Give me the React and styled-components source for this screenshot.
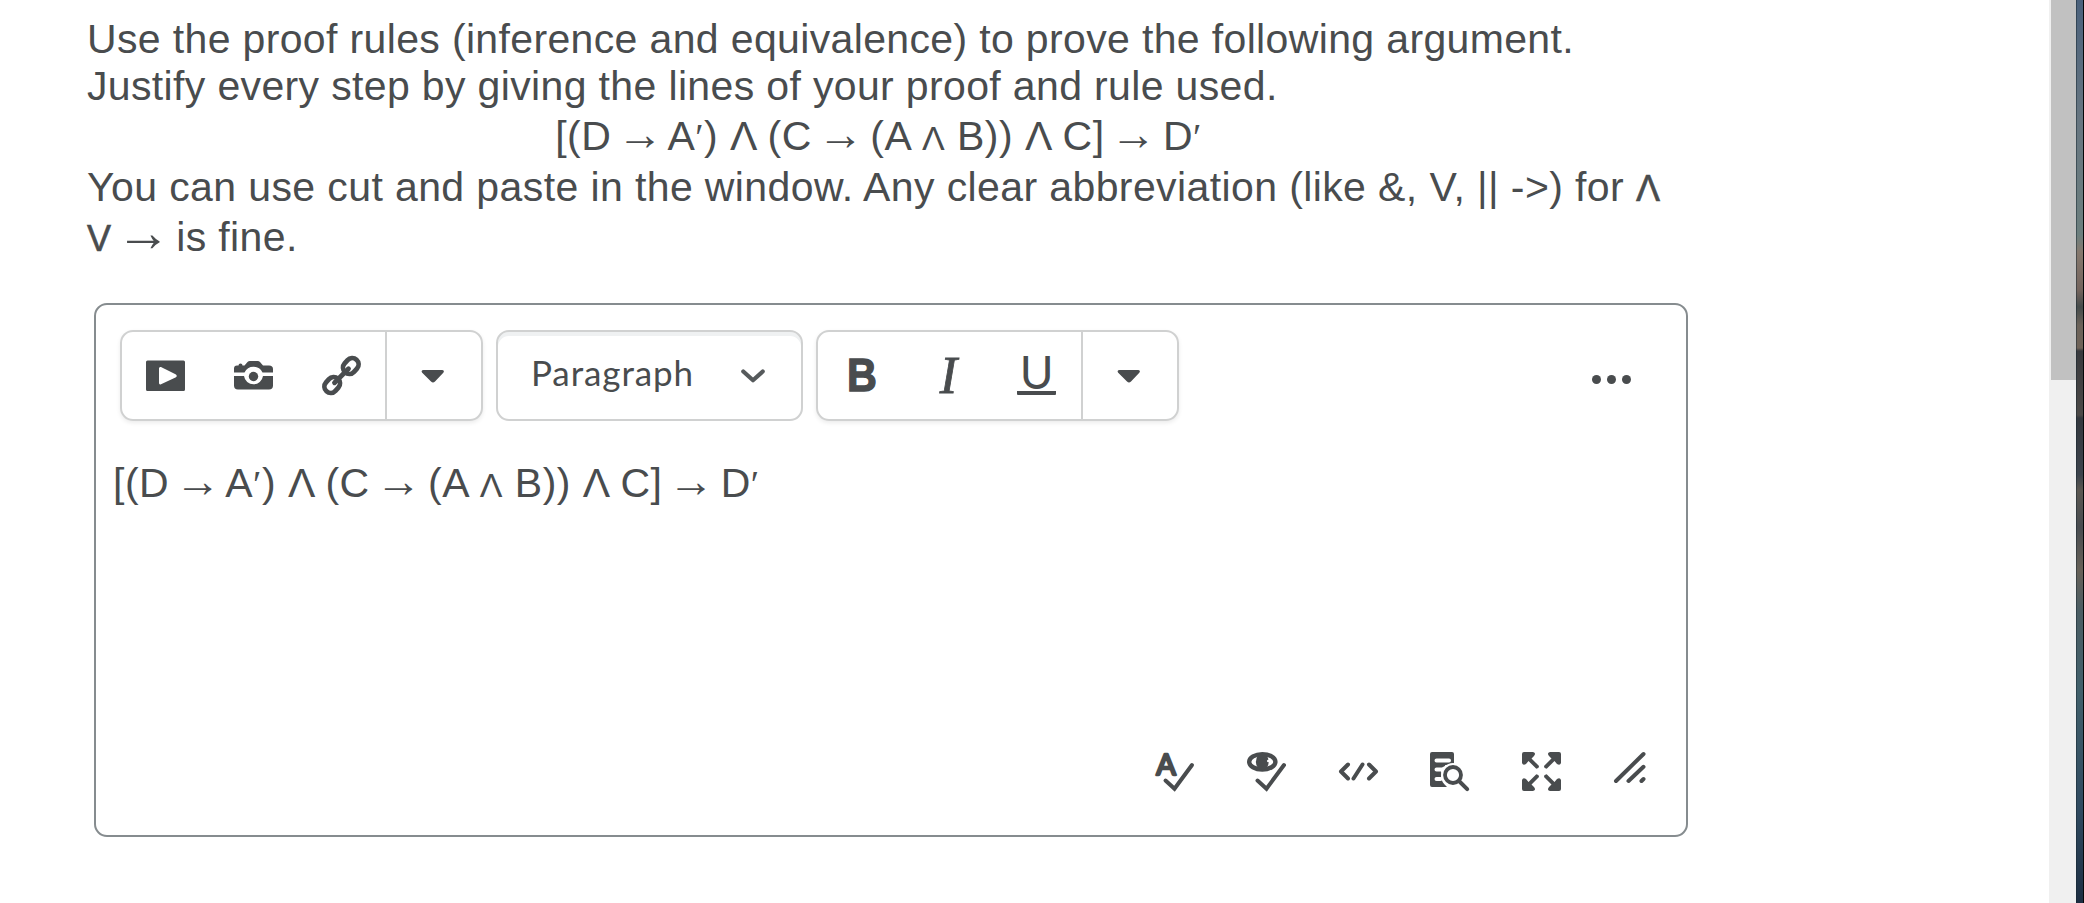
import React from "react";
import styled, { createGlobalStyle } from "styled-components";

const ink = "#494c4e";

export default function App() {
  return (
    <>
      <GlobalStyle />
      <Page>
        <Content>
          <Question>
            <Line>
              Use the proof rules (inference and equivalence) to prove the following argument.
            </Line>
            <Line>Justify every step by giving the lines of your proof and rule used.</Line>
            <FormulaLine>
              <Formula />
            </FormulaLine>
            <Hint>
              You can use cut and paste in the window. Any clear abbreviation (like &amp;, V, || -&gt;) for{" "}
              <Wedge>Λ</Wedge>
              <br />
              <Wedge>V</Wedge> <Arrow $size={55}>→</Arrow> is fine.
            </Hint>
          </Question>
          <Editor>
            <Toolbar>
              <Group>
                <Tool><MediaIcon /></Tool>
                <Tool><CameraIcon /></Tool>
                <Tool><LinkIcon /></Tool>
                <More><Caret /></More>
              </Group>
              <Select>
                <span>Paragraph</span>
                <Chevron />
              </Select>
              <Group>
                <Tool><Bold>B</Bold></Tool>
                <Tool><Italic>I</Italic></Tool>
                <Tool><Underline>U</Underline></Tool>
                <More><Caret /></More>
              </Group>
              <Dots>
                <Dot />
                <Dot />
                <Dot />
              </Dots>
            </Toolbar>
            <Text>
              <Formula />
            </Text>
            <Footer>
              <SpellIcon />
              <EyeIcon />
              <CodeIcon />
              <PreviewIcon />
              <ExpandIcon />
              <ResizeIcon />
            </Footer>
          </Editor>
        </Content>
        <Scrollbar>
          <Thumb />
        </Scrollbar>
        <Wallpaper />
      </Page>
    </>
  );
}

function Formula() {
  return (
    <FormulaText>
      [(D <Arrow>→</Arrow> A<Prime>′</Prime>) Λ (C <Arrow>→</Arrow> (A <Small>Λ</Small> B)) Λ C]{" "}
      <Arrow>→</Arrow> D<Prime>′</Prime>
    </FormulaText>
  );
}

function MediaIcon() {
  return (
    <Icon viewBox="0 0 39 39">
      <path
        fillRule="evenodd"
        d="M1.5 4.5h36A1.5 1.5 0 0 1 39 6v27.500a1.500 1.500 0 0 1-1.500 1.500h-36A1.500 1.500 0 0 1 0 33.500V6a1.500 1.500 0 0 1 1.500-1.500zM13 12.500v14.500q0 2 2 1.300l15-7q1.800-1.300 0-2.700l-15-7.500q-2-.600-2 1.400z"
      />
    </Icon>
  );
}

function CameraIcon() {
  return (
    <Icon viewBox="0 0 39 39">
      <path d="M0 16.500v-4Q0 9.700 3 9.500h1.500q0-2 2-2t2 2h2L13.500 6q1-1 2.300-1h8q1.200 0 2.200 1l3 3.500h6q4 0 4 3.500v3.500H28.500a10 10 0 0 0-18 0z" />
      <path d="M0 20h10a9.600 9.600 0 0 0 19 0h10v9.500q0 4-4 4H4q-4 0-4-4z" />
      <circle cx="19.500" cy="20.500" r="4.700" />
    </Icon>
  );
}

function LinkIcon() {
  return (
    <Icon viewBox="0 0 39 39">
      <g fill="none" stroke={ink} strokeWidth="4.800" strokeLinecap="round">
        <rect x="20.300" y="3.700" width="17" height="12.600" rx="6.300" transform="rotate(-48 28.800 10)" />
        <rect x="1.700" y="22.700" width="17" height="12.600" rx="6.300" transform="rotate(-48 10.200 29)" />
        <path d="M12.500 26.700L26.500 12.700" />
      </g>
    </Icon>
  );
}

function Caret() {
  return (
    <Icon viewBox="0 0 39 39">
      <path d="M9.500 14h18.500q3 .5 1.300 2.800l-8.300 8.800q-2 2-4 0L8.200 16.800Q6.500 14.500 9.500 14z" />
    </Icon>
  );
}

function Chevron() {
  return (
    <svg width="24" height="14" viewBox="0 0 24 14">
      <path d="M2.300 2.500L12 11.200l9.700-8.700" fill="none" stroke="#565a5c" strokeWidth="4.200" strokeLinecap="round" strokeLinejoin="round" />
    </svg>
  );
}

function SpellIcon() {
  return (
    <Icon viewBox="0 0 39 39">
      <text x="11" y="22.500" textAnchor="middle" fontFamily="Lato, sans-serif" fontSize="29" letterSpacing="0" stroke={ink} strokeWidth="2.400" strokeLinejoin="round">A</text>
      <path d="M10.500 28.500l9 8.200L37 13" fill="none" stroke={ink} strokeWidth="4" strokeLinecap="round" />
    </Icon>
  );
}

function EyeIcon() {
  return (
    <Icon viewBox="0 0 39 39">
      <ellipse cx="15.300" cy="9.800" rx="13.100" ry="7.700" fill="none" stroke={ink} strokeWidth="4.400" />
      <ellipse cx="15.300" cy="9.800" rx="6.400" ry="8.500" />
      <circle cx="21.200" cy="9" r="1.200" fill="#fff" />
      <path d="M10.500 28.500l9 8.200L37 13" fill="none" stroke={ink} strokeWidth="4" strokeLinecap="round" />
    </Icon>
  );
}

function CodeIcon() {
  return (
    <Icon viewBox="0 0 39 39">
      <path d="M9 12.500l-7 7 7 7M23.500 12.500l-9 14M30 12.500l7 7-7 7" fill="none" stroke={ink} strokeWidth="4" strokeLinecap="round" strokeLinejoin="round" />
    </Icon>
  );
}

function PreviewIcon() {
  return (
    <Icon viewBox="0 0 39 39">
      <path d="M2 0h20q2 0 2 2v11H14a12 12 0 0 0-3 10q0 7 6 12H2q-2 0-2-2V2Q0 0 2 0z" />
      <path d="M6.500 8.500h12.500M6.500 17.500h6M6.500 27h4" stroke="#fff" strokeWidth="4" strokeLinecap="round" />
      <path d="M7.500 13h6M7.500 22h3" stroke={ink} strokeWidth="3.600" strokeLinecap="round" />
      <circle cx="23" cy="23" r="12" fill="#fff" />
      <circle cx="23" cy="23" r="8" fill="none" stroke={ink} strokeWidth="3.800" />
      <path d="M29 29l8.200 8.200" stroke={ink} strokeWidth="4" strokeLinecap="round" />
    </Icon>
  );
}

function ExpandIcon() {
  const arrow = "M0 2q0-2 2-2h9q3.500 1 1 4L9.500 6.500l7.300 7.300q.800 2.500-2.500 3L6.500 9 4 12q-3 2-4-1z";
  return (
    <Icon viewBox="0 0 39 39">
      <path d={arrow} />
      <path d={arrow} transform="translate(39 0) scale(-1 1)" />
      <path d={arrow} transform="translate(0 39) scale(1 -1)" />
      <path d={arrow} transform="translate(39 39) scale(-1 -1)" />
    </Icon>
  );
}

function ResizeIcon() {
  return (
    <Icon viewBox="0 0 39 39">
      <path d="M2 29L29.500 2M14.500 29l15-14.200M27.500 29l2-2" stroke={ink} strokeWidth="4" strokeLinecap="round" />
    </Icon>
  );
}

const GlobalStyle = createGlobalStyle`
  body {
    margin: 0;
    background: #fff;
    color: ${ink};
    font-family: "Liberation Sans", Arial, sans-serif;
    font-size: 41px;
    letter-spacing: 0.355px;
  }
`;
const Page = styled.div`
  display: flex;
  height: 903px;
  overflow: hidden;
`;
const Content = styled.main`
  flex: 1;
  padding: 16px 0 0 87px;
`;
const Question = styled.div`
  width: 1583px;
  white-space: nowrap;
`;
const Line = styled.div`
  line-height: 47px;
`;
const FormulaLine = styled(Line)`
  margin: 3px 0 2px;
  text-align: center;
`;
const Hint = styled.div`
  line-height: 50px;
  letter-spacing: 0.395px;
`;
const FormulaText = styled.span`
  letter-spacing: 0.5px;
`;
const Small = styled.span`
  font-size: 34px;
  line-height: 0;
`;
const Wedge = styled(Small)`
  font-size: 36px;
  -webkit-text-stroke: 0.6px ${ink};
`;
const Arrow = styled.span`
  margin: 0 ${({ $size = 46 }) => $size * -0.13}px;
  font-family: "Liberation Serif", "Times New Roman", serif;
  font-size: ${({ $size = 46 }) => $size}px;
  line-height: 0;
`;
const Prime = styled(Small)`
  font-family: "Liberation Serif", "Times New Roman", serif;
  font-size: 38px;
`;
const Editor = styled.div`
  display: flex;
  flex-direction: column;
  box-sizing: border-box;
  width: 1594px;
  height: 534px;
  margin: 41px 0 0 7px;
  padding: 25px 40px 44px 20px;
  border: 2px solid #868c8f;
  border-radius: 13px;
`;
const Toolbar = styled.div`
  display: flex;
  gap: 13px;
  margin-left: 4px;
`;
const Group = styled.div`
  display: flex;
  box-sizing: border-box;
  width: 363px;
  height: 91px;
  border: 2px solid #d0d1d1;
  border-radius: 13px;
  box-shadow: 0 2px 4px rgba(0, 0, 0, 0.08);
`;
const Tool = styled.button`
  display: flex;
  flex: 1;
  align-items: center;
  justify-content: center;
  padding: 0;
  border: 0;
  background: none;
  color: ${ink};
`;
const More = styled(Tool)`
  flex: 0 0 96px;
  box-sizing: border-box;
  padding-right: 2px;
  border-left: 2px solid #d0d1d1;
`;
const Select = styled.div`
  display: flex;
  align-items: center;
  justify-content: space-between;
  box-sizing: border-box;
  width: 307px;
  height: 91px;
  padding: 0 36px 0 33px;
  border: 2px solid #d0d1d1;
  border-radius: 13px;
  box-shadow: inset 0 4px 0 #eff1f2;
  font-family: Lato, sans-serif;
  font-size: 35px;
  letter-spacing: 0.9px;

  span {
    padding-bottom: 7px;
  }
`;
const Bold = styled.b`
  padding-bottom: 2px;
  font: 700 47px/48px "Liberation Sans", Arial, sans-serif;
  -webkit-text-stroke: 1.4px ${ink};
  transform: scaleX(0.88);
`;
const Italic = styled.i`
  padding-right: 2px;
  font: italic 52px/52px "Liberation Serif", "Times New Roman", serif;
  -webkit-text-stroke: 0.8px ${ink};
`;
const Underline = styled.span`
  width: 39px;
  height: 35px;
  margin-right: 1px;
  border-bottom: 4px solid ${ink};
  border-radius: 1px;
  text-align: center;
  font: 400 46px/32px Lato, sans-serif;
`;
const Dots = styled.div`
  display: flex;
  gap: 6px;
  align-self: center;
  margin: 8px 15px 0 auto;
`;
const Dot = styled.span`
  width: 9px;
  height: 9px;
  border-radius: 50%;
  background: ${ink};
`;
const Text = styled.div`
  flex: 1;
  margin: 39px 0 0 -3px;
  line-height: 47px;
  white-space: nowrap;
`;
const Footer = styled.div`
  display: flex;
  gap: 52.8px;
  justify-content: flex-end;
  margin-right: -7px;
`;
const Icon = styled.svg`
  display: block;
  flex: none;
  width: 39px;
  height: 39px;
  overflow: visible;
  fill: ${ink};
`;
const Scrollbar = styled.div`
  width: 27px;
  background: #f0f0f0;
`;
const Thumb = styled.div`
  height: 380px;
  margin-left: 2px;
  background: #c1c1c1;
`;
const Wallpaper = styled.div`
  box-sizing: border-box;
  width: 8px;
  border-left: 1px solid rgba(20, 35, 45, 0.5);
  border-right: 1px solid #050708;
  background: linear-gradient(
    #4a617c 0,
    #677681 120px,
    #6c7f7e 235px,
    #86796e 252px,
    #74645d 290px,
    #454b4b 307px,
    #6b6259 325px,
    #706358 348px,
    #38393d 351px,
    #4c4947 415px,
    #34383e 418px,
    #3c434c 475px,
    #5b5751 490px,
    #484c50 527px,
    #676158 570px,
    #4b5d63 610px,
    #41606b 690px,
    #2f4a60 810px,
    #1d2e42 903px
  );
`;
